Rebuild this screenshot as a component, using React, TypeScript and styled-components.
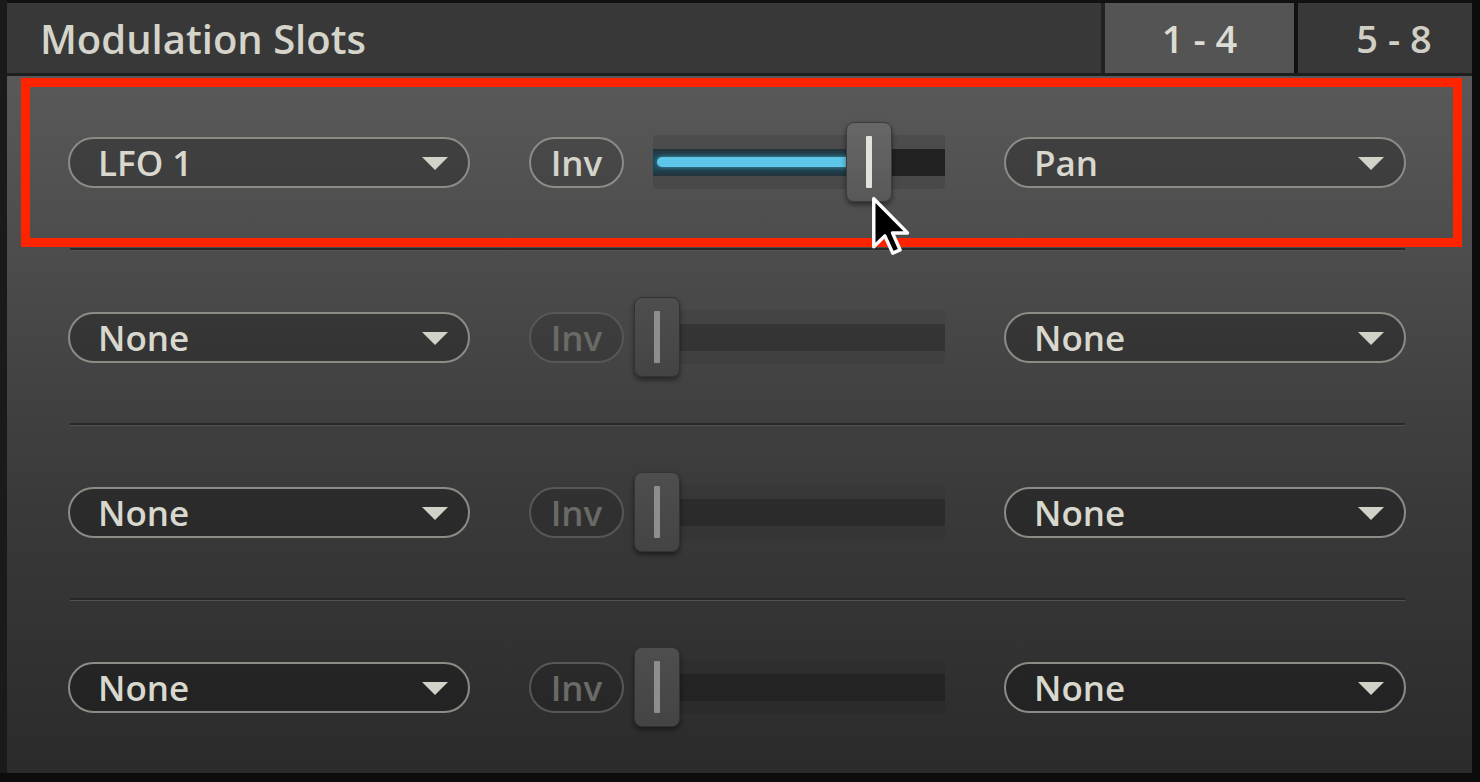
import styled, { createGlobalStyle } from "styled-components";

const GlobalStyle = createGlobalStyle`
  html, body {
    margin: 0;
    padding: 0;
    background: #0c0c0c;
  }
  body {
    font-family: "Open Sans", "DejaVu Sans", sans-serif;
  }
`;

const Window = styled.div`
  position: relative;
  width: 1465px;
  height: 773px;
  border-left: 7px solid #1a1a1a;
  display: flex;
  flex-direction: column;
  overflow: hidden;
`;

const Header = styled.div`
  height: 77px;
  box-sizing: border-box;
  border-top: 3px solid #111;
  border-bottom: 3px solid #1e1e1e;
  background: #383838;
  display: flex;
  align-items: stretch;
`;

const Title = styled.div`
  flex: 1;
  display: flex;
  align-items: center;
  padding-left: 33px;
  font-size: 40px;
  font-weight: 600;
  color: #d4d4ca;
  border-right: 4px solid #222;
`;

const Tab = styled.div<{ $active?: boolean; $width: number; $shift?: number }>`
  width: ${(p) => p.$width}px;
  display: flex;
  align-items: center;
  justify-content: center;
  padding-left: ${(p) => p.$shift ?? 0}px;
  box-sizing: border-box;
  font-size: 38px;
  font-weight: 600;
  color: ${(p) => (p.$active ? "#dcdcd2" : "#cfcfc5")};
  background: ${(p) => (p.$active ? "#545454" : "#383838")};
  & + & {
    border-left: 4px solid #111;
  }
`;

const Body = styled.div`
  flex: 1;
  background: linear-gradient(to bottom, #595959 0%, #4a4a4a 30%, #3a3a3a 60%, #2b2b2b 100%);
  display: flex;
  flex-direction: column;
`;

const Row = styled.div`
  height: 172px;
  display: flex;
  align-items: center;
  padding-left: 61px;
`;

const Divider = styled.div`
  height: 2px;
  margin: 0 67px 0 63px;
  background: #242424;
  border-bottom: 1px solid #555;
  opacity: 0.85;
`;

const Select = styled.div`
  width: 402px;
  height: 51px;
  box-sizing: border-box;
  border: 2.5px solid #8c8c86;
  border-radius: 26px;
  background: rgba(0, 0, 0, 0.24);
  display: flex;
  align-items: center;
  justify-content: space-between;
  padding: 0 20px 0 28px;
  font-size: 35px;
  font-weight: 600;
  color: #d8d8ce;
`;

const Arrow = styled.span`
  width: 0;
  height: 0;
  border-left: 13px solid transparent;
  border-right: 13px solid transparent;
  border-top: 13px solid #d2d2c8;
  margin-top: 2px;
`;

const InvButton = styled.div<{ $dim?: boolean }>`
  width: 95px;
  height: 51px;
  margin-left: 59px;
  box-sizing: border-box;
  border: 2.5px solid ${(p) => (p.$dim ? "#575757" : "#8c8c86")};
  border-radius: 26px;
  background: rgba(0, 0, 0, 0.14);
  display: flex;
  align-items: center;
  justify-content: center;
  font-size: 35px;
  font-weight: 600;
  color: ${(p) => (p.$dim ? "#6a6a66" : "#d4d4ca")};
`;

const Slider = styled.div`
  position: relative;
  width: 311px;
  height: 80px;
  margin-left: 10px;
  margin-right: 59px;
  display: flex;
  align-items: center;
`;

const Track = styled.div<{ $dim?: boolean }>`
  margin-left: 19px;
  flex: 1;
  height: 54px;
  border-radius: 4px;
  background: rgba(0, 0, 0, ${(p) => (p.$dim ? 0.05 : 0.1)});
  display: flex;
  align-items: center;
`;

const Channel = styled.div<{ $dim?: boolean }>`
  position: relative;
  flex: 1;
  height: 27px;
  background: ${(p) => (p.$dim ? "rgba(0,0,0,0.2)" : "#222")};
  overflow: hidden;
`;

// blue amount bar with its dark teal glow
const Fill = styled.div`
  position: absolute;
  left: 0;
  top: 0;
  bottom: 0;
  background: linear-gradient(to bottom, #24333a 0%, #1d4a5c 35%, #1d4a5c 65%, #24333a 100%);
  display: flex;
  align-items: center;
  padding: 0 4px;
  box-sizing: border-box;
  &::before {
    content: "";
    flex: 1;
    height: 10px;
    border-radius: 5px;
    background: #5ec6e8;
    box-shadow: 0 0 4px rgba(94, 198, 232, 0.6);
  }
`;

const Knob = styled.div<{ $dim?: boolean }>`
  position: absolute;
  top: 0;
  width: 46px;
  height: 80px;
  box-sizing: border-box;
  border-radius: 8px;
  border: 1px solid ${(p) => (p.$dim ? "#333" : "#3c3c3c")};
  background: ${(p) =>
    p.$dim
      ? "linear-gradient(to bottom, #4e4e4e, #444)"
      : "linear-gradient(to bottom, #676767, #585858)"};
  box-shadow: 0 3px 5px rgba(0, 0, 0, 0.45);
  display: flex;
  justify-content: center;
  align-items: center;
  &::after {
    content: "";
    width: 6px;
    height: 52px;
    border-radius: 1px;
    background: ${(p) => (p.$dim ? "#8e8e8a" : "#e2e2da")};
  }
`;

const Highlight = styled.div`
  position: absolute;
  left: 14px;
  top: 78px;
  width: 1441px;
  height: 169px;
  box-sizing: border-box;
  border: 9px solid #ff2400;
  pointer-events: none;
`;

const Pointer = styled.svg`
  position: absolute;
  left: 863px;
  top: 195px;
  width: 42px;
  height: 64px;
  pointer-events: none;
`;

type Slot = { source: string; target: string; amount: number; active: boolean };

const slots: Slot[] = [
  { source: "LFO 1", target: "Pan", amount: 0.8, active: true },
  { source: "None", target: "None", amount: 0, active: false },
  { source: "None", target: "None", amount: 0, active: false },
  { source: "None", target: "None", amount: 0, active: false },
];

const KNOB_TRAVEL = 311 - 46;

function ModSlider({ amount, active }: { amount: number; active: boolean }) {
  const left = amount * KNOB_TRAVEL;
  return (
    <Slider>
      <Track $dim={!active}>
        <Channel $dim={!active}>
          {amount > 0 && <Fill style={{ width: left + 4 }} />}
        </Channel>
      </Track>
      <Knob $dim={!active} style={{ left }} />
    </Slider>
  );
}

export default function App() {
  return (
    <>
      <GlobalStyle />
      <Window>
        <Header>
          <Title>Modulation Slots</Title>
          <Tab $active $width={189}>1 - 4</Tab>
          <Tab $width={178} $shift={18}>5 - 8</Tab>
        </Header>
        <Body>
          {slots.map((s, i) => (
            <div key={i}>
              {i > 0 && <Divider />}
              <Row>
                <Select>
                  {s.source}
                  <Arrow />
                </Select>
                <InvButton $dim={!s.active}>Inv</InvButton>
                <ModSlider amount={s.amount} active={s.active} />
                <Select>
                  {s.target}
                  <Arrow />
                </Select>
              </Row>
            </div>
          ))}
        </Body>
        <Highlight />
        <Pointer viewBox="0 0 17 26">
          <path
            d="M1.5 1.5 L1.5 21 L6 16.6 L9.2 23.6 L12.2 22.3 L9.1 15.4 L15.2 15.4 Z"
            fill="#000"
            stroke="#fff"
            strokeWidth="1.4"
            strokeLinejoin="round"
          />
        </Pointer>
      </Window>
    </>
  );
}
